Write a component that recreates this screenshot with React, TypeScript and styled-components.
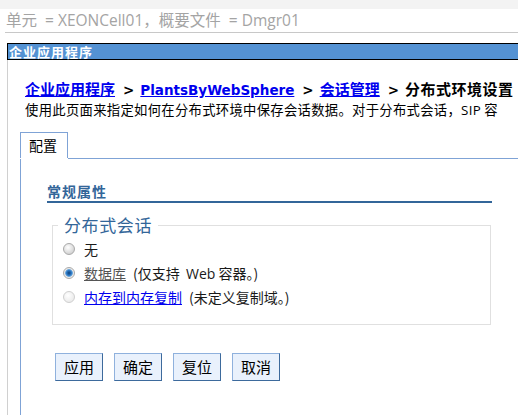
import styled, { createGlobalStyle } from "styled-components";

const GlobalStyle = createGlobalStyle`
  html, body {
    margin: 0;
    padding: 0;
    background: #fff;
  }
  body {
    overflow: hidden;
    font-family: "Noto Sans CJK SC", "DejaVu Sans", sans-serif;
  }
`;

const Page = styled.div`
  width: 518px;
  height: 415px;
  display: flex;
  flex-direction: column;
  overflow: hidden;
`;

const TopStrip = styled.div`
  height: 9px;
  flex-shrink: 0;
  background: #f3f3f3;
`;

const ScopeBar = styled.div`
  height: 22px;
  margin-left: 5px;
  padding: 1px 0 0 1px;
  border-bottom: 1px solid #c8c8c8;
  font-family: "Open Sans", "Noto Sans CJK SC", sans-serif;
  font-size: 15.5px;
  line-height: 20px;
  color: #a4a4a4;
  white-space: nowrap;
  flex-shrink: 0;
`;

const TitleBar = styled.div`
  margin: 10px 0 0 7px;
  height: 15px;
  padding-left: 1px;
  border: 1px solid #000;
  border-right: none;
  background: #5492d3;
  color: #fff;
  font-size: 13px;
  font-weight: bold;
  line-height: 15px;
  letter-spacing: 1px;
  flex-shrink: 0;
`;

const PanelBody = styled.div`
  flex: 1;
  display: flex;
  flex-direction: column;
  margin-left: 7px;
  padding-left: 17px;
  border-left: 1px solid #d0d0d0;
`;

const Breadcrumb = styled.div`
  margin-top: 20px;
  font-size: 15px;
  font-weight: bold;
  line-height: 18px;
  white-space: nowrap;
  color: #000;
`;

const Crumb = styled.a<{ $latin?: boolean }>`
  color: #0000ee;
  text-decoration: underline;
  font-family: ${(p) => (p.$latin ? '"DejaVu Sans", sans-serif' : "inherit")};
  font-size: ${(p) => (p.$latin ? "13.5px" : "inherit")};
`;

const Sep = styled.span`
  font-family: "DejaVu Sans", sans-serif;
  font-size: 13.5px;
  margin: 0 6px 0 8px;
`;

const Current = styled.span`
  letter-spacing: 0.5px;
`;

const Description = styled.div`
  margin-top: 2px;
  font-size: 13.33px;
  line-height: 18px;
  letter-spacing: 0.3px;
  white-space: nowrap;
  overflow: hidden;
  color: #000;
`;

const TabRow = styled.div`
  display: flex;
  height: 27px;
  margin: 13px 0 0 -5px;
`;

const Tab = styled.div`
  width: 48px;
  height: 26px;
  padding-left: 8px;
  box-sizing: border-box;
  border: 1px solid #7fa3d6;
  border-bottom: none;
  font-size: 14px;
  line-height: 24px;
  color: #000;
`;

const TabFiller = styled.div`
  flex: 1;
  border-bottom: 1px solid #7fa3d6;
`;

const TabPanel = styled.div`
  flex: 1;
  margin-left: -5px;
  padding-left: 26px;
  border-left: 1px solid #7fa3d6;
`;

const SectionTitle = styled.div`
  width: 445px;
  margin-top: 23px;
  padding-bottom: 1px;
  border-bottom: 2px solid #336699;
  color: #336699;
  font-size: 14px;
  font-weight: bold;
  line-height: 18px;
  letter-spacing: 1px;
`;

const Fieldset = styled.fieldset`
  width: 439px;
  box-sizing: border-box;
  margin: 12px 0 0 5px;
  padding: 2px 10px 15px;
  border: 1px solid #e0e0e0;
`;

const Legend = styled.legend`
  margin-left: -5px;
  padding: 0 6px;
  color: #336699;
  font-size: 17px;
  line-height: 20px;
  letter-spacing: 0.6px;
`;

const OptionRow = styled.div`
  display: flex;
  align-items: center;
  height: 24px;
  font-size: 14px;
  white-space: nowrap;
  color: #1a1a1a;
`;

const Radio = styled.span<{ $checked?: boolean; $faint?: boolean }>`
  width: 12px;
  height: 12px;
  box-sizing: border-box;
  margin-right: 9px;
  border-radius: 50%;
  border: 1px solid ${(p) => (p.$faint ? "#cfcfcf" : "#a9a9a9")};
  background: ${(p) =>
    p.$checked
      ? "radial-gradient(circle, #0b3f7a 0, #2d79c4 2.5px, #6aa6dc 3.5px, #e6e6e6 4.2px, #f8f8f8 6px)"
      : p.$faint
      ? "radial-gradient(circle at 40% 35%, #ffffff 0, #ececec 70%)"
      : "radial-gradient(circle at 40% 35%, #ffffff 0, #d2d2d2 75%)"};
  flex-shrink: 0;
`;

const OptionLink = styled.a<{ $visited?: boolean }>`
  color: ${(p) => (p.$visited ? "#555" : "#0000ee")};
  text-decoration: underline;
  margin-right: 7px;
`;

const Latin = styled.span`
  font-family: "Open Sans", sans-serif;
`;

const ButtonRow = styled.div`
  display: flex;
  gap: 11px;
  margin: 28px 0 0 8px;
`;

const Button = styled.button`
  width: 48px;
  height: 28px;
  padding: 0;
  border: 1px solid;
  border-color: #8fb1dd #3d6a9c #3d6a9c #8fb1dd;
  background: #e9f1fc;
  color: #000;
  font-family: "Noto Sans CJK SC", sans-serif;
  font-size: 15px;
  line-height: 26px;
`;

export default function App() {
  return (
    <Page>
      <GlobalStyle />
      <TopStrip />
      <ScopeBar>单元 &nbsp;= XEONCell01，概要文件 &nbsp;= Dmgr01</ScopeBar>
      <TitleBar>企业应用程序</TitleBar>
      <PanelBody>
        <Breadcrumb>
          <Crumb href="#">企业应用程序</Crumb>
          <Sep>&gt;</Sep>
          <Crumb href="#" $latin>
            PlantsByWebSphere
          </Crumb>
          <Sep>&gt;</Sep>
          <Crumb href="#">会话管理</Crumb>
          <Sep>&gt;</Sep>
          <Current>分布式环境设置</Current>
        </Breadcrumb>
        <Description>
          使用此页面来指定如何在分布式环境中保存会话数据。对于分布式会话，<Latin>SIP</Latin>&nbsp;容
        </Description>
        <TabRow>
          <Tab>配置</Tab>
          <TabFiller />
        </TabRow>
        <TabPanel>
          <SectionTitle>常规属性</SectionTitle>
          <Fieldset>
            <Legend>分布式会话</Legend>
            <OptionRow>
              <Radio />
              无
            </OptionRow>
            <OptionRow>
              <Radio $checked />
              <OptionLink href="#" $visited>
                数据库
              </OptionLink>
              (仅支持&nbsp;&nbsp;<Latin>Web</Latin>&nbsp;容器。)
            </OptionRow>
            <OptionRow>
              <Radio $faint />
              <OptionLink href="#">内存到内存复制</OptionLink>
              (未定义复制域。)
            </OptionRow>
          </Fieldset>
          <ButtonRow>
            <Button>应用</Button>
            <Button>确定</Button>
            <Button>复位</Button>
            <Button>取消</Button>
          </ButtonRow>
        </TabPanel>
      </PanelBody>
    </Page>
  );
}
